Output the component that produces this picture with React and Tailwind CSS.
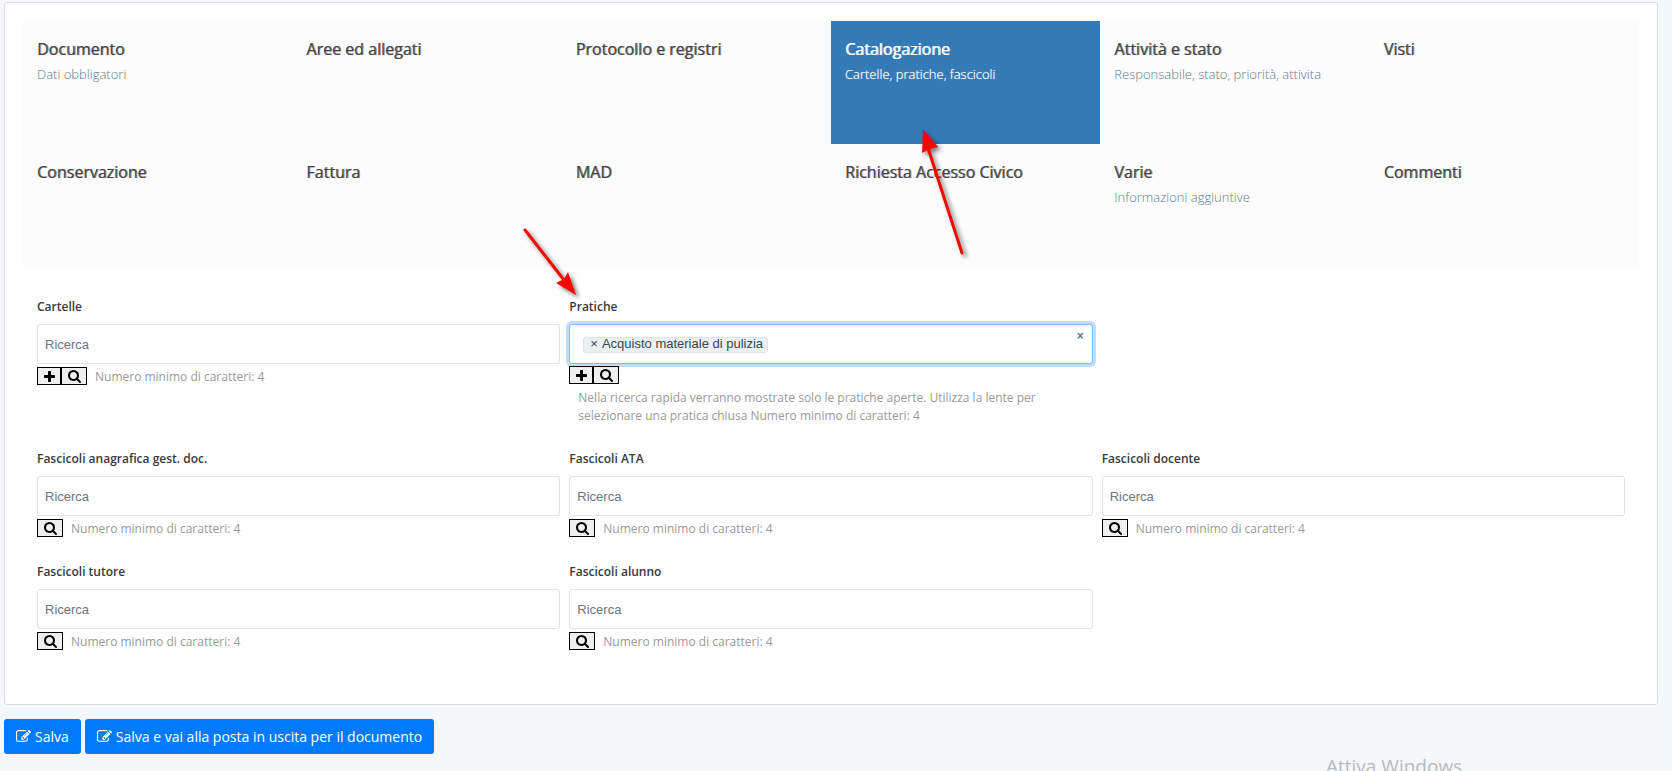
const sections = [
  { title: "Documento", subtitle: "Dati obbligatori" },
  { title: "Aree ed allegati" },
  { title: "Protocollo e registri" },
  { title: "Catalogazione", subtitle: "Cartelle, pratiche, fascicoli", active: true },
  { title: "Attività e stato", subtitle: "Responsabile, stato, priorità, attivita" },
  { title: "Visti" },
  { title: "Conservazione" },
  { title: "Fattura" },
  { title: "MAD" },
  { title: "Richiesta Accesso Civico" },
  { title: "Varie", subtitle: "Informazioni aggiuntive" },
  { title: "Commenti" },
];

function PlusIcon() {
  return (
    <svg viewBox="192 128 1408 1408" className="h-[11px] w-[11px]" fill="currentColor" aria-hidden="true">
      <path d="M1600 736v192q0 40-28 68t-68 28h-416v416q0 40-28 68t-68 28h-192q-40 0-68-28t-28-68v-416h-416q-40 0-68-28t-28-68v-192q0-40 28-68t68-28h416v-416q0-40 28-68t68-28h192q40 0 68 28t28 68v416h416q40 0 68 28t28 68z" />
    </svg>
  );
}

function SearchIcon() {
  return (
    <svg viewBox="64 128 1664 1664" className="h-[13px] w-[13px]" fill="currentColor" aria-hidden="true">
      <path d="M1216 832q0-185-131.5-316.5t-316.5-131.5-316.5 131.5-131.5 316.5 131.5 316.5 316.5 131.5 316.5-131.5 131.5-316.5zm512 832q0 52-38 90t-90 38q-54 0-90-38l-343-342q-179 124-399 124-143 0-273.5-55.5t-225-150-150-225-55.5-273.5 55.5-273.5 150-225 225-150 273.5-55.5 273.5 55.5 225 150 150 225 55.5 273.5q0 220-124 399l343 343q37 37 37 90z" />
    </svg>
  );
}

function PencilSquare() {
  return (
    <svg viewBox="0 0 1792 1792" className="h-[15px] w-[15px]" fill="currentColor" aria-hidden="true">
      <path d="M888 1184l116-116-152-152-116 116v56h96v96h56zm440-720q-16-16-33 1l-350 350q-17 17-1 33t33-1l350-350q17-17 1-33zm80 594v190q0 119-84.5 203.5t-203.5 84.5h-832q-119 0-203.5-84.5t-84.5-203.5v-832q0-119 84.5-203.5t203.5-84.5h832q63 0 117 25 15 7 18 23 3 17-9 29l-49 49q-14 14-32 8-23-6-45-6h-832q-66 0-113 47t-47 113v832q0 66 47 113t113 47h832q66 0 113-47t47-113v-126q0-13 9-22l64-64q15-15 35-7t20 29zm-96-738l288 288-672 672h-288v-288zm444 132l-92 92-288-288 92-92q28-28 68-28t68 28l152 152q28 28 28 68t-28 68z" />
    </svg>
  );
}

function SectionTab({ title, subtitle, active }) {
  return (
    <li>
      <button
        type="button"
        className={
          active
            ? "flex h-[123px] w-full flex-col items-start bg-[#337ab7] px-3.5 pt-4 text-left text-white"
            : "flex h-[123px] w-full flex-col items-start px-3.5 pt-4 text-left text-[#444444]"
        }
      >
        <span
          className={
            active
              ? "text-base leading-6 [text-shadow:1px_0_0_rgba(255,255,255,0.8)]"
              : "text-base leading-6 [text-shadow:1px_0_0_rgba(68,68,68,0.6)]"
          }
        >
          {title}
        </span>
        {subtitle && (
          <span
            className={
              active
                ? "text-[13px] leading-[26px] font-light [text-shadow:0_0_1px_rgba(255,255,255,0.8)]"
                : "text-[13px] leading-[26px] font-light text-[#607d8b]"
            }
          >
            {subtitle}
          </span>
        )}
      </button>
    </li>
  );
}

function IconButton({ label, children }) {
  return (
    <button
      type="button"
      aria-label={label}
      className="flex h-[18px] items-center border border-black bg-[#efefef] pr-[5px] pl-1.5 text-black"
    >
      {children}
    </button>
  );
}

function Tools({ add }) {
  return (
    <div className="flex">
      {add && (
        <IconButton label="Aggiungi">
          <PlusIcon />
        </IconButton>
      )}
      <IconButton label="Cerca">
        <SearchIcon />
      </IconButton>
    </div>
  );
}

function SearchField({ id, label, add }) {
  return (
    <div>
      <label htmlFor={id} className="block text-xs leading-[22px] font-semibold text-[#343a40]">
        {label}
      </label>
      <input
        id={id}
        type="text"
        placeholder="Ricerca"
        className="mt-1.5 block h-10 w-full rounded-[3px] border border-[#dce4e6] bg-white px-[7px] font-['Liberation_Sans',Arial,sans-serif] text-[13px] placeholder:text-[#6c757d]"
      />
      <div className="mt-[3px] flex h-[19px] items-start gap-2">
        <Tools add={add} />
        <span className="text-xs leading-5 text-[#999999]">Numero minimo di caratteri: 4</span>
      </div>
    </div>
  );
}

function PraticheField() {
  return (
    <div>
      <label htmlFor="pratiche" className="block text-xs leading-[22px] font-semibold text-[#343a40]">
        Pratiche
      </label>
      <div className="mt-1.5 flex h-10 items-start rounded-[3px] border border-[#80bdff] bg-white pr-2 pl-[13px] font-['Liberation_Sans',Arial,sans-serif] shadow-[0_0_0_3px_#bfdeff]">
        <span className="mt-3 flex h-4 items-start gap-1 rounded-[3px] border border-[#dce4e6] bg-[#eceff1] pr-1 pl-1.5 text-[13px] leading-3 text-[#37474f]">
          <button type="button" aria-label="Rimuovi Acquisto materiale di pulizia">
            ×
          </button>
          Acquisto materiale di pulizia
        </span>
        <input id="pratiche" type="text" className="h-full min-w-0 flex-1 outline-none" />
        <button type="button" aria-label="Svuota" className="mt-[3px] text-xs font-bold text-[#607d8b]">
          ×
        </button>
      </div>
      <div className="mt-0.5">
        <Tools add />
      </div>
      <p className="mt-[5px] pl-[9px] text-xs leading-[18px] text-[#999999]">
        Nella ricerca rapida verranno mostrate solo le pratiche aperte. Utilizza la lente per selezionare una pratica
        chiusa Numero minimo di caratteri: 4
      </p>
    </div>
  );
}

function SaveButton({ children }) {
  return (
    <button
      type="button"
      className="flex h-[35px] items-center gap-1 rounded-[3px] bg-[#007bff] px-3 text-sm text-white"
    >
      <PencilSquare />
      {children}
    </button>
  );
}

function Arrow({ className, width, height, line, head }) {
  return (
    <svg className={className} width={width} height={height} aria-hidden="true">
      <path d={line} stroke="#fe0000" strokeWidth="3" strokeLinecap="round" fill="none" />
      <path d={head} fill="#fe0000" />
    </svg>
  );
}

export default function App() {
  return (
    <div className="relative h-screen overflow-hidden bg-[#f5f7fa] pt-0.5 pr-3.5 pl-1 font-['Open_Sans',sans-serif]">
      <main className="rounded-[3px] border border-[#dadfe1] bg-white px-[18px] pt-[18px] pb-[53px]">
        <nav>
          <ul className="grid grid-cols-6 bg-[#fcfcfc]">
            {sections.map((section) => (
              <SectionTab key={section.title} {...section} />
            ))}
          </ul>
        </nav>

        <form className="mt-[29px] grid grid-cols-3 gap-x-[9px] gap-y-[23px] px-3.5">
          <SearchField id="cartelle" label="Cartelle" add />
          <PraticheField />
          <div />
          <SearchField id="anagrafica" label="Fascicoli anagrafica gest. doc." />
          <SearchField id="ata" label="Fascicoli ATA" />
          <SearchField id="docente" label="Fascicoli docente" />
          <SearchField id="tutore" label="Fascicoli tutore" />
          <SearchField id="alunno" label="Fascicoli alunno" />
        </form>
      </main>

      <div className="mt-3.5 flex gap-1">
        <SaveButton>Salva</SaveButton>
        <SaveButton>Salva e vai alla posta in uscita per il documento</SaveButton>
      </div>

      <p className="absolute top-[754px] left-[1326px] text-[19px] leading-6 text-[#b9bbbd]">Attiva Windows</p>

      <Arrow
        className="absolute top-[220px] left-[515px] drop-shadow-[3px_3px_2px_rgba(0,0,0,0.5)]"
        width="75"
        height="85"
        line="M10 10L49 60"
        head="M61 75L41 63L49 59L53 52Z"
      />
      <Arrow
        className="absolute top-[120px] left-[910px] drop-shadow-[3px_3px_2px_rgba(0,0,0,0.5)]"
        width="70"
        height="145"
        line="M52 133L18 28"
        head="M13 9L28 27L20 29L12 33Z"
      />
    </div>
  );
}
